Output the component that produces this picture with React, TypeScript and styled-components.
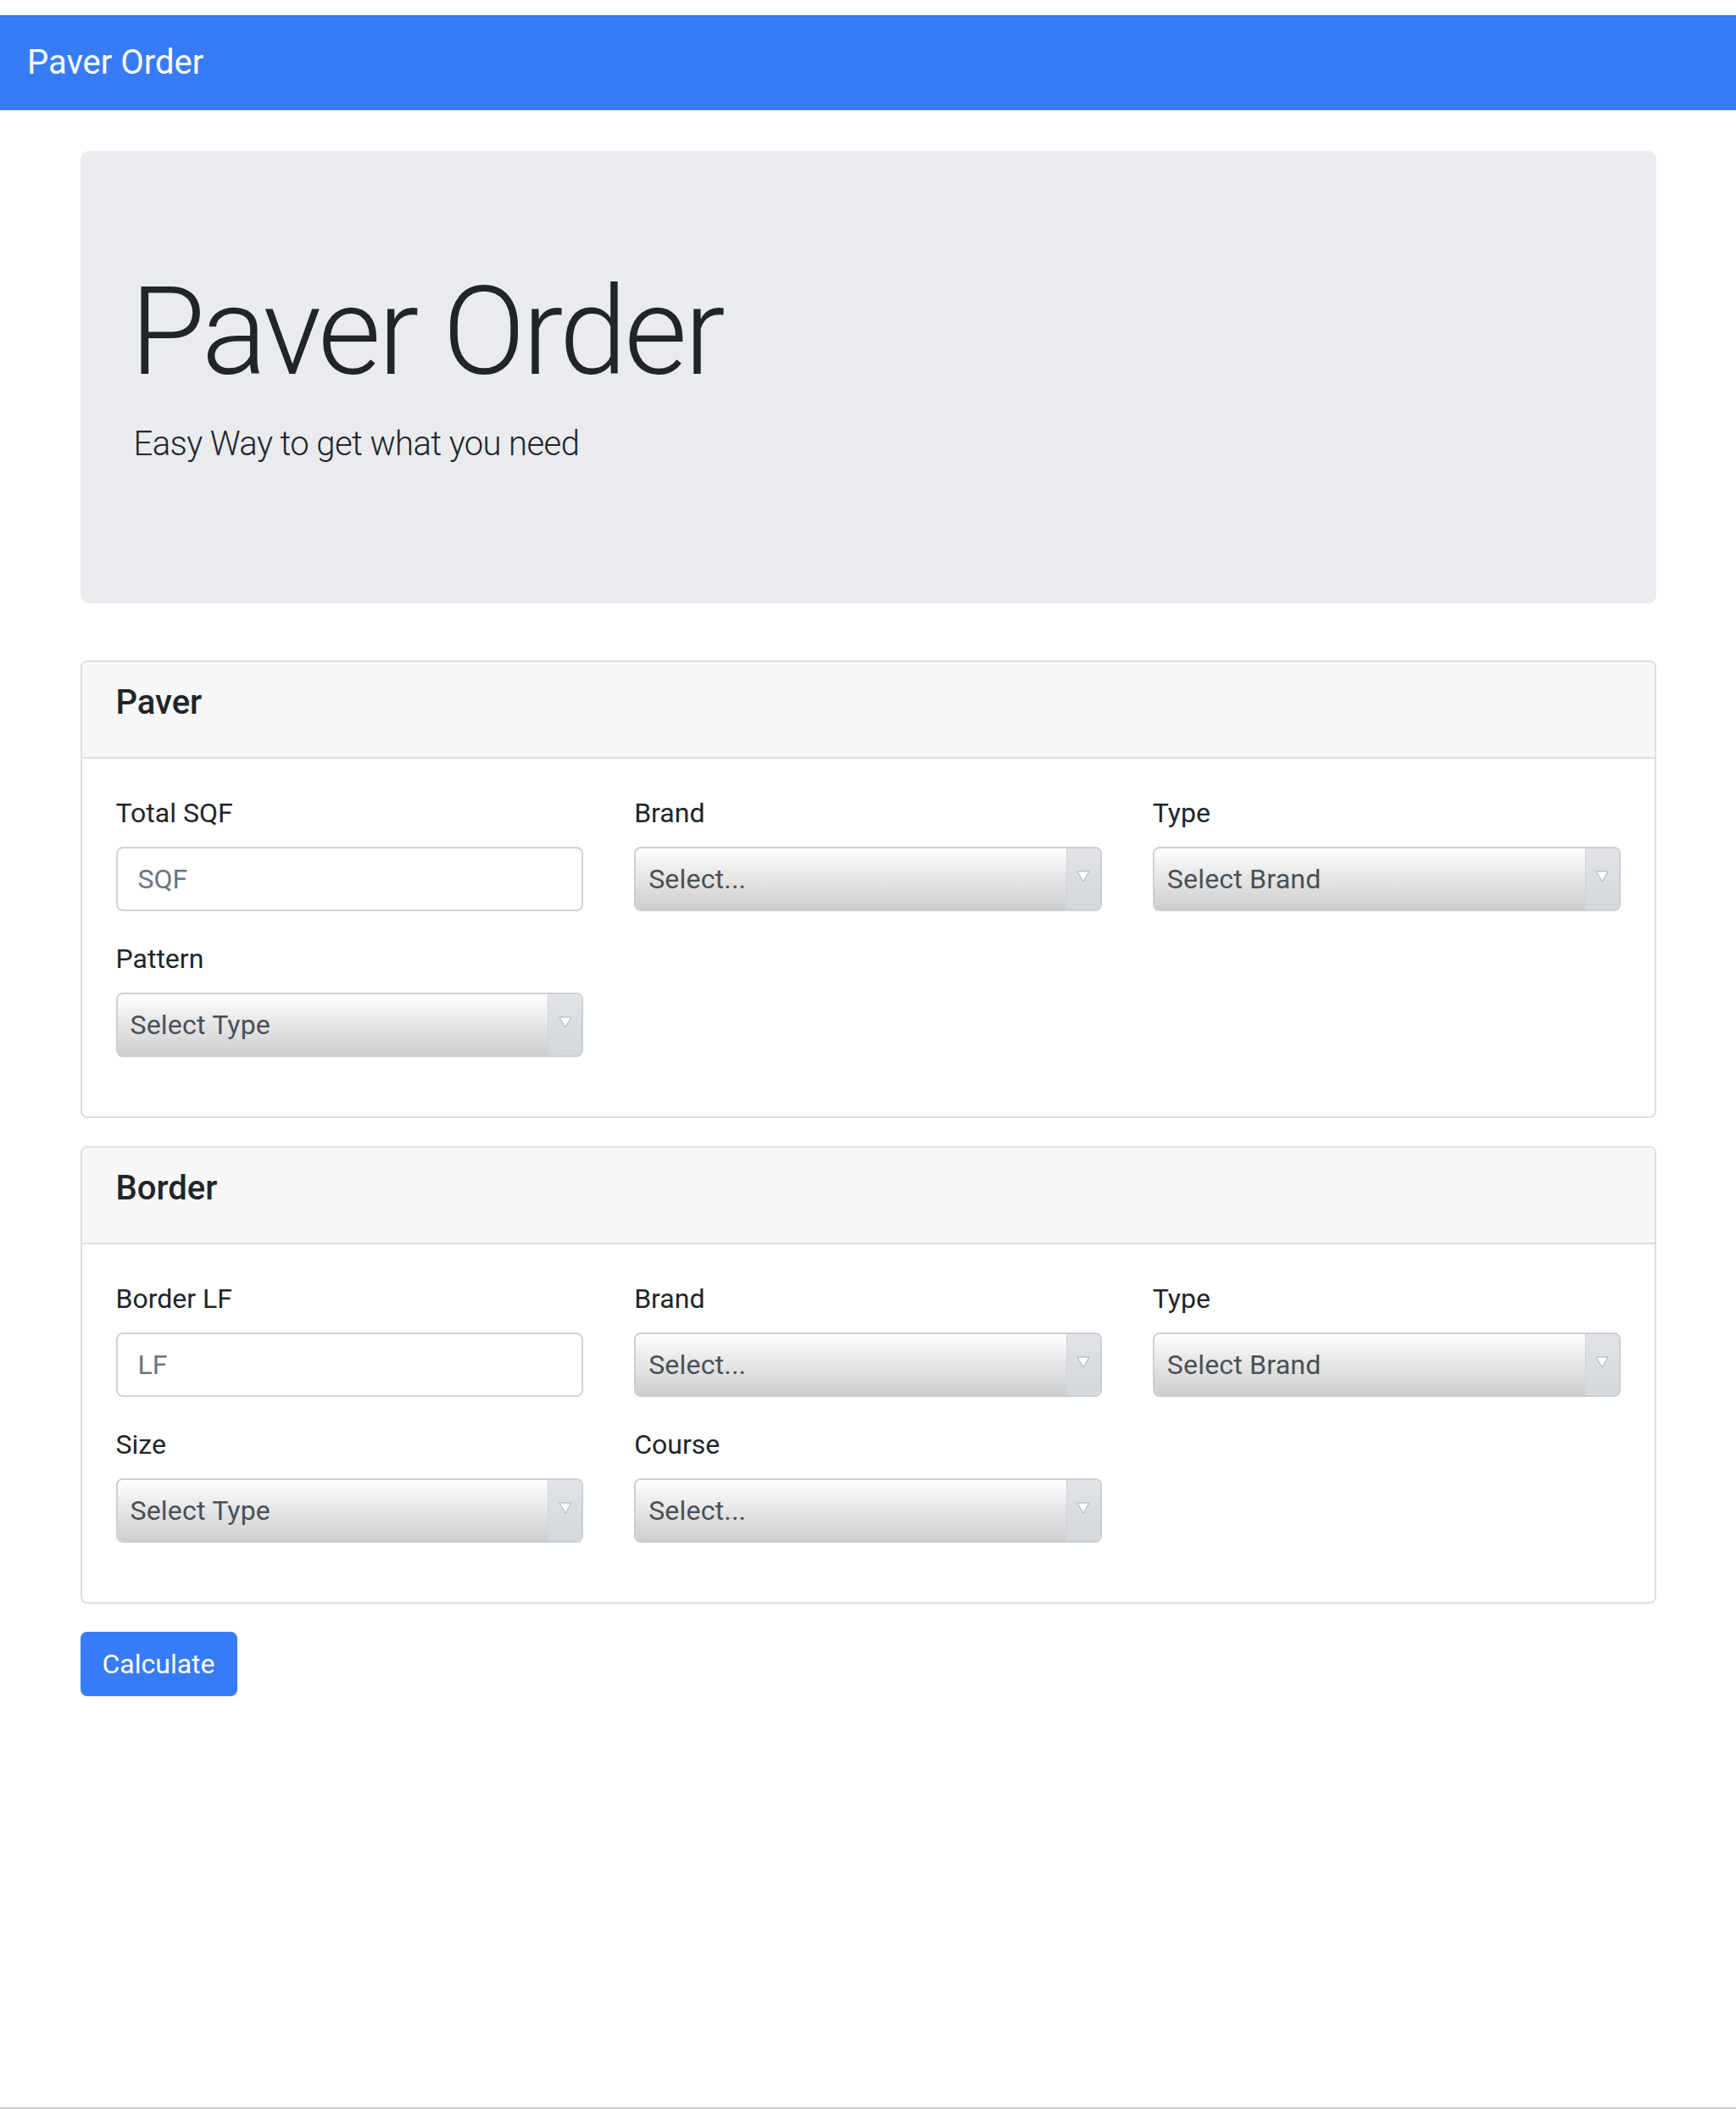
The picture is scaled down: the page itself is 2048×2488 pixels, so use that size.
import React from "react";
import styled, { createGlobalStyle } from "styled-components";

const GlobalStyle = createGlobalStyle`
  html, body { margin: 0; padding: 0; background: #ffffff; }
  body {
    font-family: Roboto, "Liberation Sans", Arial, sans-serif;
    color: #212529;
    -webkit-font-smoothing: antialiased;
  }
  *, *::before, *::after { box-sizing: border-box; }
`;

const Page = styled.div`
  min-height: 100vh;
  padding-top: 18px;
  border-bottom: 2px solid #c8c8c8;
`;

const Navbar = styled.nav`
  height: 112px;
  background: #377cf6;
  box-shadow: inset 0 1px 0 #2c66d2;
  display: flex;
  align-items: center;
  padding: 0 32px;
`;

const Brand = styled.a`
  font-size: 40px;
  line-height: 60px;
  padding: 10px 0;
  color: #ffffff;
  text-decoration: none;
  font-weight: 400;
`;

const Container = styled.main`
  width: 1859px;
  margin: 0 auto;
  padding-top: 48px;
`;

const Jumbotron = styled.section`
  background: #e9ebef;
  border-radius: 10px;
  padding: 128px 64px;
  margin-bottom: 67px;
`;

const HeroTitle = styled.h1`
  margin: 0 0 16px -5px;
  font-size: 144px;
  line-height: 172px;
  font-weight: 300;
  letter-spacing: -3.6px;
  color: #212529;
`;

const Lead = styled.p`
  margin: 0 0 30px -1px;
  font-size: 40px;
  line-height: 60px;
  font-weight: 300;
  letter-spacing: -0.6px;
  color: #212529;
`;

const Card = styled.section`
  border: 2px solid #dfdfdf;
  border-radius: 8px;
  margin-bottom: 33px;
  background: #ffffff;
  overflow: hidden;
`;

const CardHeader = styled.header`
  background: #f7f7f7;
  border-bottom: 2px solid #dfdfdf;
  padding: 24px 40px;
`;

const CardTitle = styled.h5`
  margin: 0 0 16px;
  font-size: 40px;
  line-height: 48px;
  font-weight: 500;
  color: #212529;
`;

const CardBody = styled.div`
  padding: 40px 40px 38px;
  display: grid;
  grid-template-columns: repeat(3, 1fr);
  column-gap: 60px;
`;

const FormGroup = styled.div`
  margin-bottom: 32px;
`;

const Label = styled.label`
  display: block;
  font-size: 32px;
  line-height: 48px;
  margin-bottom: 16px;
  color: #212529;
`;

const TextInput = styled.input`
  display: block;
  width: 100%;
  height: 76px;
  padding: 12px 24px;
  border: 2px solid #ced4da;
  border-radius: 8px;
  font-family: Roboto, "Liberation Sans", Arial, sans-serif;
  font-size: 32px;
  line-height: 48px;
  color: #495057;
  background: #ffffff;
  outline: none;
  &::placeholder {
    color: #6c757d;
    opacity: 1;
  }
`;

const SelectBox = styled.div`
  display: flex;
  width: 100%;
  height: 76px;
  border: 2px solid #cbcfd5;
  border-radius: 8px;
  overflow: hidden;
`;

const SelectText = styled.span`
  flex: 1;
  display: flex;
  align-items: center;
  padding-left: 15px;
  font-size: 32px;
  line-height: 48px;
  letter-spacing: 0.2px;
  color: #495057;
  background: linear-gradient(
    to bottom,
    #ffffff 0%,
    #f1f1f1 25%,
    #dcdcdc 70%,
    #cdcdcd 100%
  );
`;

const SelectArrow = styled.span`
  width: 40px;
  display: flex;
  justify-content: center;
  align-items: flex-start;
  padding-top: 26px;
  background: linear-gradient(to bottom, #e1e3e7 0%, #d4d7db 100%);
  border-left: 1px solid #d0d3d7;
`;

const Button = styled.button`
  display: inline-block;
  margin: 0;
  padding: 12px 24px;
  font-family: Roboto, "Liberation Sans", Arial, sans-serif;
  font-size: 32px;
  line-height: 48px;
  font-weight: 400;
  color: #ffffff;
  background: #377cf6;
  border: 2px solid #377cf6;
  border-radius: 8px;
  cursor: pointer;
`;

const Triangle = () => (
  <svg width="16" height="14" viewBox="0 0 16 14">
    <polygon points="1,1 15,1 8,13" fill="#ffffff" stroke="#a9aeb4" strokeWidth="1" />
  </svg>
);

type Field =
  | { kind: "input"; label: string; placeholder: string }
  | { kind: "select"; label: string; value: string };

const Select = ({ value }: { value: string }) => (
  <SelectBox role="listbox">
    <SelectText>{value}</SelectText>
    <SelectArrow>
      <Triangle />
    </SelectArrow>
  </SelectBox>
);

const FormCard = ({ title, fields }: { title: string; fields: Field[] }) => (
  <Card>
    <CardHeader>
      <CardTitle>{title}</CardTitle>
    </CardHeader>
    <CardBody>
      {fields.map((f) => (
        <FormGroup key={f.label}>
          <Label>{f.label}</Label>
          {f.kind === "input" ? (
            <TextInput placeholder={f.placeholder} />
          ) : (
            <Select value={f.value} />
          )}
        </FormGroup>
      ))}
    </CardBody>
  </Card>
);

const paverFields: Field[] = [
  { kind: "input", label: "Total SQF", placeholder: "SQF" },
  { kind: "select", label: "Brand", value: "Select..." },
  { kind: "select", label: "Type", value: "Select Brand" },
  { kind: "select", label: "Pattern", value: "Select Type" },
];

const borderFields: Field[] = [
  { kind: "input", label: "Border LF", placeholder: "LF" },
  { kind: "select", label: "Brand", value: "Select..." },
  { kind: "select", label: "Type", value: "Select Brand" },
  { kind: "select", label: "Size", value: "Select Type" },
  { kind: "select", label: "Course", value: "Select..." },
];

export default function App() {
  return (
    <>
      <GlobalStyle />
      <Page>
        <Navbar>
          <Brand href="#">Paver Order</Brand>
        </Navbar>
        <Container>
          <Jumbotron>
            <HeroTitle>Paver Order</HeroTitle>
            <Lead>Easy Way to get what you need</Lead>
          </Jumbotron>
          <FormCard title="Paver" fields={paverFields} />
          <FormCard title="Border" fields={borderFields} />
          <Button type="button">Calculate</Button>
        </Container>
      </Page>
    </>
  );
}
